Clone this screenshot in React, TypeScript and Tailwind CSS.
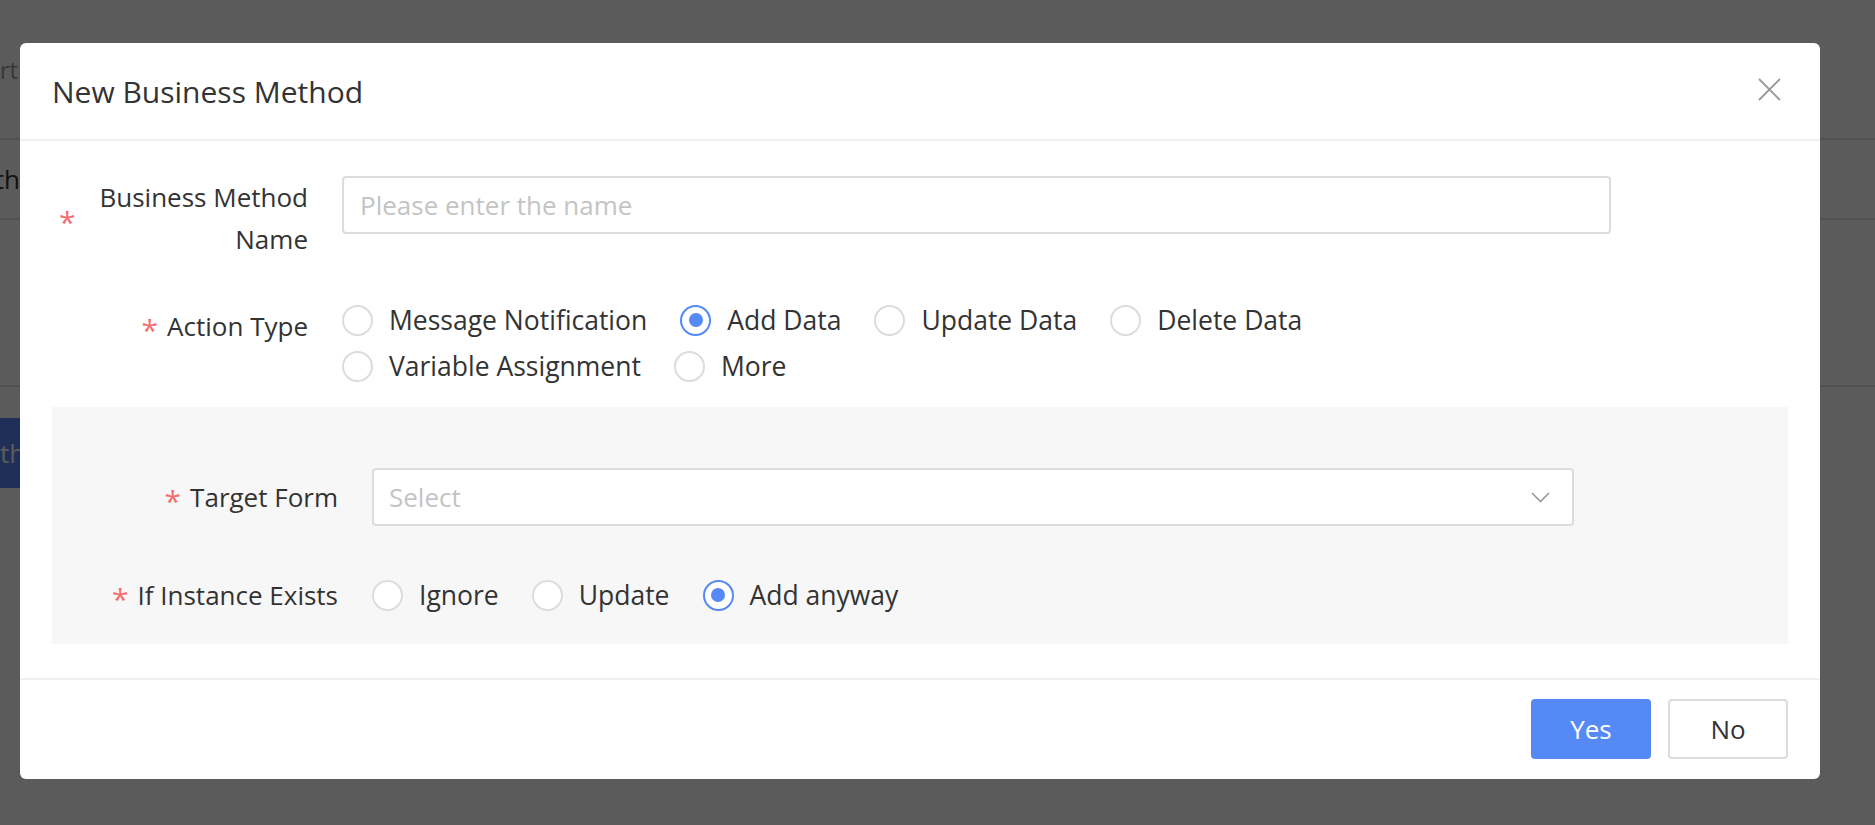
import React from "react";

const radioRowA = [
  { label: "Message Notification", checked: false },
  { label: "Add Data", checked: true },
  { label: "Update Data", checked: false },
  { label: "Delete Data", checked: false },
  { label: "Variable Assignment", checked: false },
  { label: "More", checked: false },
];

const instanceOptions = [
  { label: "Ignore", checked: false },
  { label: "Update", checked: false },
  { label: "Add anyway", checked: true },
];

function Radio({ label, checked }: { label: string; checked: boolean }) {
  return (
    <label className="flex items-center h-[46px] mr-[33px] cursor-pointer">
      <span
        className={
          checked
            ? "w-[31px] h-[31px] rounded-full border-2 border-[#5589f6] bg-white flex items-center justify-center"
            : "w-[31px] h-[31px] rounded-full border-2 border-[#dcdcdc] bg-white"
        }
      >
        {checked && <span className="w-[14px] h-[14px] rounded-full bg-[#5589f6]" />}
      </span>
      <span className="ml-[16px] text-[26.5px] leading-none text-[#333333] whitespace-nowrap">{label}</span>
    </label>
  );
}

function Label({ children, className = "" }: { children: React.ReactNode; className?: string }) {
  return (
    <div className={"w-[256px] pl-[7px] flex items-center justify-end shrink-0 " + className}>
      <span className="text-[30px] leading-none text-[#f56c6c] mr-[9px] translate-y-[4px]">*</span>
      <span className="text-[26px] leading-[42px] text-[#333333] text-right">{children}</span>
    </div>
  );
}

function BackgroundPage() {
  return (
    <div className="w-full h-full bg-white flex flex-col">
      <div className="h-[140px] border-b-2 border-[#e2e2e2] flex items-center">
        <div className="w-[18px] overflow-hidden flex justify-end pt-[2px]">
          <span className="text-[24px] text-[#9a9a9a] whitespace-nowrap">Report</span>
        </div>
      </div>
      <div className="h-[80px] border-b-2 border-[#e2e2e2] flex items-center">
        <div className="w-[20px] overflow-hidden flex justify-end">
          <span className="text-[26px] text-[#303133] whitespace-nowrap">Month</span>
        </div>
      </div>
      <div className="h-[167px] border-b-2 border-[#e2e2e2]" />
      <div className="mt-[31px] h-[70px] w-[120px] -ml-[60px] bg-[#5783f5] flex items-center pl-[30px]">
        <span className="text-[26px] text-white whitespace-nowrap">Path</span>
      </div>
    </div>
  );
}

export default function App() {
  return (
    <div className="relative w-[1875px] h-[825px] overflow-hidden font-['Open_Sans',sans-serif]">
      <BackgroundPage />

      {/* mask */}
      <div className="absolute inset-0 bg-[rgba(0,0,0,0.643)]" />

      {/* dialog */}
      <div className="absolute left-[20px] top-[43px] w-[1800px] bg-white rounded-[6px] flex flex-col">
        <div className="h-[98px] border-b-2 border-[#efefef] flex items-center justify-between pl-[32px] pr-[39px]">
          <span className="text-[30px] text-[#333333]">New Business Method</span>
          <svg width="23" height="23" viewBox="0 0 23 23" fill="none" className="-mt-[3px]">
            <path d="M1 1L22 22M22 1L1 22" stroke="#999999" strokeWidth="1.8" />
          </svg>
        </div>

        <div className="pt-[35px] px-[32px] pb-[34px]">
          <div className="flex items-start mb-[37px]">
            <Label>Business Method Name</Label>
            <div className="ml-[34px] w-[1269px] h-[58px] border-2 border-[#dcdcdc] rounded-[4px] flex items-center pl-[16px]">
              <span className="text-[26px] text-[#c4c4c4]">Please enter the name</span>
            </div>
          </div>

          <div className="flex items-start">
            <Label className="pt-[8px]">Action Type</Label>
            <div className="ml-[34px] w-[1269px] flex flex-wrap">
              {radioRowA.map((r) => (
                <Radio key={r.label} label={r.label} checked={r.checked} />
              ))}
            </div>
          </div>

          <div className="mt-[18px] bg-[#f7f7f7] pt-[61px] pb-[26px] pl-[30px]">
            <div className="flex items-center">
              <Label>Target Form</Label>
              <div className="ml-[34px] w-[1202px] h-[58px] border-2 border-[#dcdcdc] rounded-[4px] bg-white flex items-center justify-between pl-[15px] pr-[22px]">
                <span className="text-[26px] text-[#c4c4c4]">Select</span>
                <svg width="19" height="11" viewBox="0 0 19 11" fill="none">
                  <path d="M1 1L9.5 9.5L18 1" stroke="#999999" strokeWidth="1.6" />
                </svg>
              </div>
            </div>

            <div className="flex items-center mt-[46px]">
              <Label>If Instance Exists</Label>
              <div className="ml-[34px] flex">
                {instanceOptions.map((r) => (
                  <Radio key={r.label} label={r.label} checked={r.checked} />
                ))}
              </div>
            </div>
          </div>
        </div>

        <div className="border-t-2 border-[#efefef] pt-[19px] pb-[20px] px-[32px] flex justify-end gap-[17px]">
          <button className="w-[120px] h-[60px] rounded-[4px] bg-[#558af6] text-white text-[26px]">Yes</button>
          <button className="w-[120px] h-[60px] rounded-[4px] border-2 border-[#dcdcdc] bg-white text-[#333333] text-[26px]">No</button>
        </div>
      </div>
    </div>
  );
}
